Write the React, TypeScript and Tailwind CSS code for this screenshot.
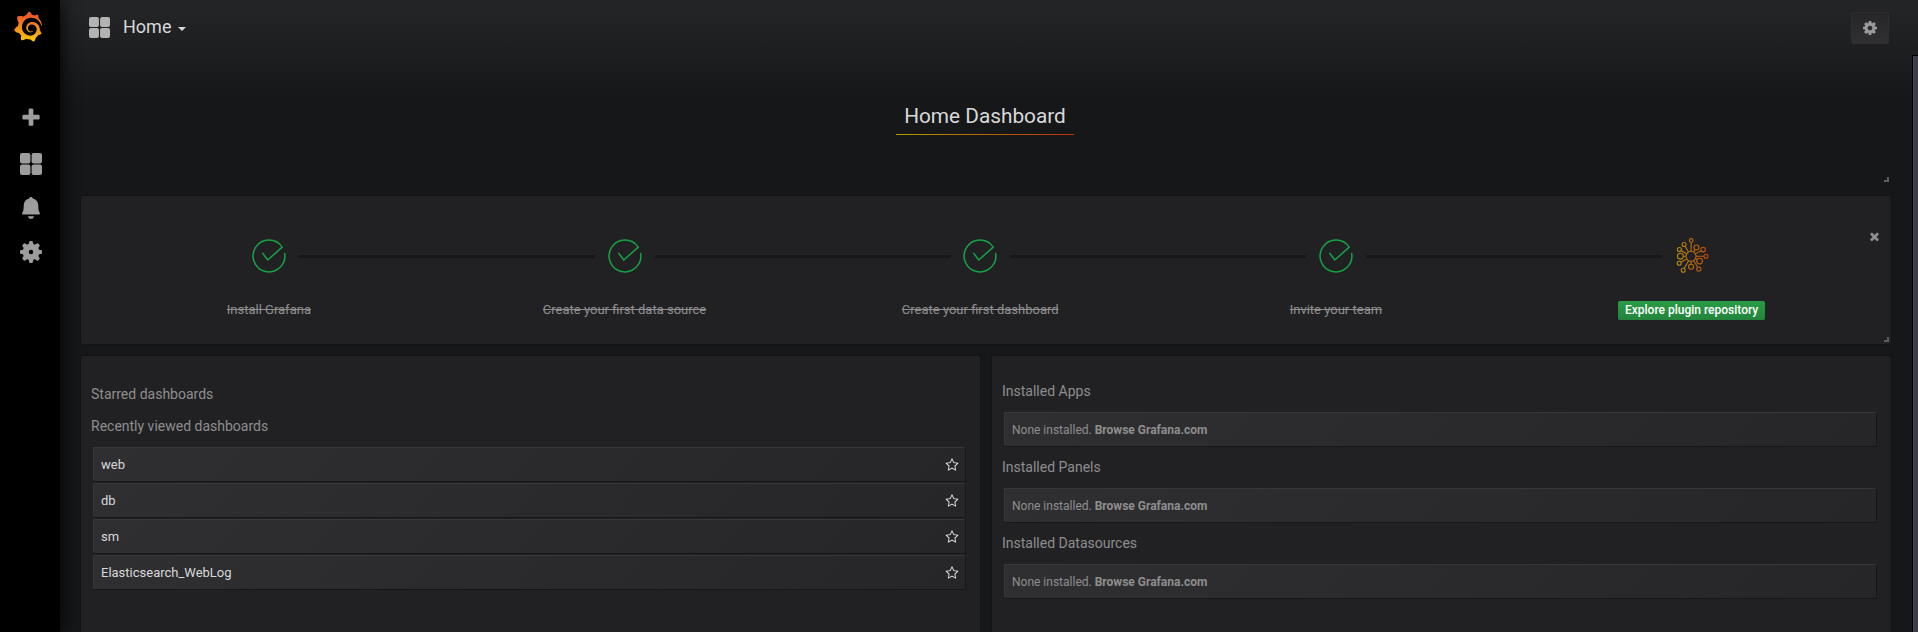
import React from "react";
import { SiGrafana } from "react-icons/si";

const PLUS =
  "M1600 736v192q0 40-28 68t-68 28h-416v416q0 40-28 68t-68 28h-192q-40 0-68-28t-28-68v-416h-416q-40 0-68-28t-28-68v-192q0-40 28-68t68-28h416v-416q0-40 28-68t68-28h192q40 0 68 28t28 68v416h416q40 0 68 28t28 68z";
const TIMES =
  "M1490 1322q0 40-28 68l-136 136q-28 28-68 28t-68-28l-294-294-294 294q-28 28-68 28t-68-28l-136-136q-28-28-28-68t28-68l294-294-294-294q-28-28-28-68t28-68l136-136q28-28 68-28t68 28l294 294 294-294q28-28 68-28t68 28l136 136q28 28 28 68t-28 68l-294 294 294 294q28 28 28 68z";
const STAR =
  "M1201 1004l306-297-422-62-189-382-189 382-422 62 306 297-73 421 378-199 377 199zm527-357q0 22-26 48l-363 354 86 500q1 7 1 20 0 50-41 50-19 0-40-12l-449-236-449 236q-22 12-40 12-21 0-31.5-14.5t-10.5-35.5q0-6 2-20l86-500-364-354q-25-27-25-48 0-37 56-46l502-73 225-455q19-41 49-41t49 41l225 455 502 73q56 9 56 46z";
const COG =
  "M1024 640q0-106-75-181t-181-75-181 75-75 181 75 181 181 75 181-75 75-181zm512-109v222q0 12-8 23t-20 13l-185 28q-19 54-39 91 35 50 107 138 10 12 10 25t-9 23q-27 37-99 108t-94 71q-12 0-26-9l-138-108q-44 23-91 38-16 136-29 186-7 28-36 28h-222q-14 0-24.5-8.5t-11.5-21.5l-28-184q-49-16-90-37l-141 107q-10 9-25 9-14 0-25-11-126-114-165-168-7-10-7-23 0-12 8-23 15-21 51-66.5t54-70.5q-27-50-41-99l-183-27q-13-2-21-12.5t-8-23.5v-222q0-12 8-23t19-13l186-28q14-46 39-92-40-57-107-138-10-12-10-24 0-10 9-23 26-36 98.5-107.5t94.5-71.5q13 0 26 10l138 107q44-23 91-38 16-136 29-186 7-28 36-28h222q14 0 24.5 8.5t11.5 21.5l28 184q49 16 90 37l142-107q9-9 24-9 13 0 25 10 129 119 165 170 7 8 7 22 0 12-8 23-15 21-51 66.5t-54 70.5q26 50 41 98l183 28q13 2 21 12.5t8 23.5z";

function Glyph({ d, className }: { d: string; className: string }) {
  return (
    <svg viewBox="0 0 1792 1792" className={className} fill="currentColor">
      <path d={d} />
    </svg>
  );
}

function Tiles({ className }: { className: string }) {
  return (
    <svg viewBox="0 0 22 22" className={className} fill="currentColor">
      <rect x="0" y="0" width="10.4" height="10.4" rx="2" />
      <rect x="11.6" y="0" width="10.4" height="10.4" rx="2" />
      <rect x="0" y="11.6" width="10.4" height="10.4" rx="2" />
      <rect x="11.6" y="11.6" width="10.4" height="10.4" rx="2" />
    </svg>
  );
}

function Bell() {
  return (
    <svg viewBox="0 0 18 22" className="h-[22px] w-[18px]" fill="currentColor">
      <path d="M9 0c-1 0-1.700.6-1.900 1.500C3.500 2.400 1.700 5.200 1.700 8.600c0 3.400-.2 5.300-1.300 6.900-.5.8-.6 2 .6 2h16c1.200 0 1.100-1.200.6-2-1.100-1.600-1.300-3.500-1.300-6.900 0-3.400-1.800-6.200-5.400-7.100C10.700.6 10 0 9 0z" />
      <path d="M6 19.200h6c-.2 1.600-1.500 2.600-3 2.600s-2.800-1-3-2.600z" />
    </svg>
  );
}

function SideGear() {
  const angles = [0, 45, 90, 135, 180, 225, 270, 315];
  return (
    <svg viewBox="-11 -11 22 22" className="size-[22px]" fill="currentColor">
      {angles.map((a) => (
        <path key={a} d="M-2.600 -7L-1.700 -10.600Q-1.500 -11 -1 -11H1Q1.500 -11 1.700 -10.600L2.600 -7Z" transform={`rotate(${a})`} />
      ))}
      <path fillRule="evenodd" d="M0-8.300A8.300 8.300 0 1 0 0 8.300 8.300 8.300 0 1 0 0-8.300ZM0-2.200A2.200 2.200 0 1 1 0 2.200 2.200 2.200 0 1 1 0-2.200Z" />
    </svg>
  );
}

function CheckRing() {
  return (
    <svg viewBox="-17 -17 34 34" className="size-[34px]" fill="none" stroke="#16a344" strokeWidth="1.500">
      <path
        d="M-6.200 -2.600L-1.200 4L13.200 -8.900A15.900 15.900 0 1 0 15.700 -2.500"
        strokeLinecap="round"
        strokeLinejoin="round"
      />
    </svg>
  );
}

const NODES: number[][] = [
  [22.500, 8.400, 1.800],
  [15.400, 12.500, 2],
  [10.700, 17.500, 2],
  [11.700, 24.200, 2.900],
  [10.500, 31.300, 2],
  [14.500, 38.200, 2],
  [22.400, 34.700, 2.500],
  [30.100, 37.100, 2.100],
  [30.900, 29.100, 2.900],
  [37.300, 24.300, 2],
  [34.400, 17.600, 2.300],
  [27.700, 15.500, 2.500],
];

function PluginBurst() {
  const cx = 22.3;
  const cy = 24.3;
  const hub = 5;
  return (
    <svg viewBox="4.300 6 36 36" className="size-[36px]" fill="none" stroke="url(#burst)" strokeWidth="1.100">
      <defs>
        <linearGradient id="burst" gradientUnits="userSpaceOnUse" x1="7" y1="24" x2="40" y2="24">
          <stop offset="0" stopColor="#b3920c" />
          <stop offset="1" stopColor="#c4450d" />
        </linearGradient>
      </defs>
      <circle cx={cx} cy={cy} r={hub} />
      {NODES.map(([x, y, r]) => {
        const len = Math.hypot(x - cx, y - cy);
        const ux = (x - cx) / len;
        const uy = (y - cy) / len;
        return (
          <g key={`${x}-${y}`}>
            <circle cx={x} cy={y} r={r} />
            <path d={`M${cx + ux * hub} ${cy + uy * hub}L${x - ux * r + 0.01} ${y - uy * r + 0.01}`} />
          </g>
        );
      })}
    </svg>
  );
}

const cornerMark = "absolute size-[5px] border-r-2 border-b-2 border-[#5d5d5f]";

const card =
  "flex h-[33px] items-center bg-[linear-gradient(135deg,#2f2f32,#262628)] px-[7px] shadow-[-1px_-1px_0_0_rgba(255,255,255,0.1),1px_1px_0_0_rgba(0,0,0,0.3)]";

const steps = ["Install Grafana", "Create your first data source", "Create your first dashboard", "Invite your team"];
const dashboards = ["web", "db", "sm", "Elasticsearch_WebLog"];
const plugins = ["Installed Apps", "Installed Panels", "Installed Datasources"];

export default function App() {
  return (
    <div className="flex h-[632px] w-[1918px] overflow-hidden bg-[#161719] font-['Roboto',sans-serif] text-[13px] leading-[20px] text-[#d8d9da]">
      <aside className="relative z-10 flex w-[60px] shrink-0 flex-col items-center bg-black text-[#9d9d9d] shadow-[0_0_20px_black]">
        <svg width="0" height="0" className="absolute">
          <linearGradient id="flame" x1="0" y1="0" x2="0" y2="1">
            <stop offset="0.15" stopColor="#f05a28" />
            <stop offset="1" stopColor="#fbca0a" />
          </linearGradient>
        </svg>
        <SiGrafana className="mt-[11px] -ml-1 h-[31px] w-[30px] fill-[url(#flame)]" />
        <nav className="ml-[2px] flex flex-col items-center">
          <Glyph d={PLUS} className="mt-[65px] size-[22px]" />
          <Tiles className="mt-[24px] size-[22px]" />
          <div className="mt-[22px]"><Bell /></div>
          <div className="mt-[22px]"><SideGear /></div>
        </nav>
      </aside>

      <main className="flex min-w-0 flex-1 flex-col bg-[linear-gradient(180deg,#222426_10px,#161719_100px)]">
        <header className="flex h-[55px] shrink-0 items-center pr-[29px] pl-[29px]">
          <Tiles className="size-[21px] text-[#b3b3b3]" />
          <h1 className="mb-[2px] ml-[13px] text-[18px] leading-[27px] text-[#d8d9da]">Home</h1>
          <span className="mt-[3px] ml-[7px] border-x-[4px] border-t-[4px] border-x-transparent border-t-[#d8d9da]" />
          <button className="mt-px ml-auto flex h-8 w-[38px] items-center justify-center rounded-[2px] border border-[#2f2f31] bg-[linear-gradient(180deg,#262628,#303032)] text-[#9a9a9b]">
            <svg viewBox="0 -128 1536 1536" className="size-[14px]" fill="currentColor">
              <path d={COG} />
            </svg>
          </button>
        </header>

        <div className="flex min-h-0 flex-1">
          <div className="flex min-w-0 flex-1 flex-col pl-[20px]">
            <section className="relative mr-[20px] flex h-[130px] shrink-0 flex-col items-center pt-[47px] pr-[2px]">
              <h2 className="border-b border-b-transparent px-[8px] pb-[3px] text-[20.8px] leading-[29px] [border-image:linear-gradient(90deg,#b39a00,#bf2f0c)_0_0_1_0]">
                Home Dashboard
              </h2>
              <span className={`${cornerMark} right-[3px] bottom-[3px]`} />
            </section>

            <section className="relative mt-[10px] mr-[20px] h-[150px] shrink-0 rounded-[3px] border border-[#141414] bg-[#212124]">
              <ol className="flex pt-[43px] pl-[10px] text-center text-[#8e8e8e]">
                {steps.map((s) => (
                  <li key={s} className="flex w-[355.7px] flex-col items-center">
                    <div className="relative flex h-[34px] items-center">
                      <CheckRing />
                      <span className="absolute top-[16px] left-[47px] h-[3px] w-[296px] bg-[#161719]" />
                    </div>
                    <span className="mt-[27px] line-through">{s}</span>
                  </li>
                ))}
                <li className="flex w-[355.7px] flex-col items-center">
                  <div className="-mt-px mr-px flex h-[36px] items-center"><PluginBurst /></div>
                  <a className="mt-[27px] h-[19px] rounded-[2px] bg-[linear-gradient(180deg,#299c46,#23843b)] px-[7px] text-[12px] leading-[19px] font-medium text-white">
                    Explore plugin repository
                  </a>
                </li>
              </ol>
              <Glyph d={TIMES} className="absolute top-[34px] right-[10px] size-[13px] text-[#8e8e8e]" />
              <span className={`${cornerMark} right-[2px] bottom-[2px]`} />
            </section>

            <div className="mt-[10px] mr-[20px] flex min-h-0 flex-1 gap-[10px] text-[#8e8e8e]">
              <section className="w-[901px] rounded-t-[3px] border border-b-0 border-[#141414] bg-[#212124] pt-[28px] pr-[15px] pl-[10px]">
                <h3 className="text-[14px] leading-[21px]">Starred dashboards</h3>
                <h3 className="mt-[11px] text-[14px] leading-[21px]">Recently viewed dashboards</h3>
                <div className="mt-[11px] ml-[3px] flex flex-col gap-[3px]">
                  {dashboards.map((d) => (
                    <div key={d} className={card}>
                      <span className="flex-1 text-[#d8d9da]">{d}</span>
                      <Glyph d={STAR} className="-mr-px size-[14px] text-[#d8d9da]" />
                    </div>
                  ))}
                </div>
              </section>
              <section className="w-[901px] rounded-t-[3px] border border-b-0 border-[#141414] bg-[#212124] pt-[25px] pr-[15px] pl-[10px]">
                {plugins.map((p) => (
                  <div key={p} className="h-[76px]">
                    <h3 className="text-[14px] leading-[21px]">{p}</h3>
                    <div className="pt-[11px] pl-[3px]">
                      <div className={card}>
                        <span className="text-[12px]">
                          None installed. <b className="font-bold">Browse Grafana.com</b>
                        </span>
                      </div>
                    </div>
                  </div>
                ))}
              </section>
            </div>
          </div>
          <div className="w-[6px] border-t border-l border-black bg-[linear-gradient(90deg,#404357,#3a383d)]" />
        </div>
      </main>
    </div>
  );
}
